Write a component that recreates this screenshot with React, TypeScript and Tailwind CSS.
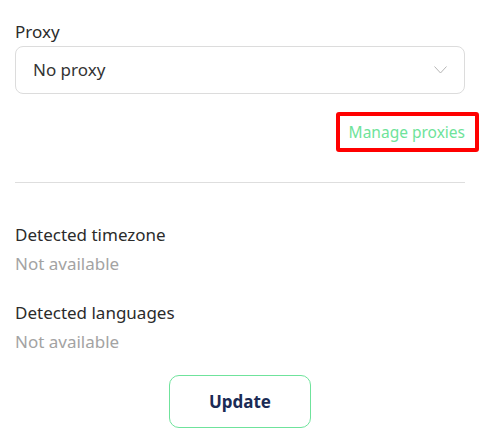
import React from "react";

export default function App() {
  const font = { fontFamily: '"Noto Sans", "Open Sans", sans-serif' };
  return (
    <div className="w-[485px] h-[442px] bg-white overflow-hidden" style={font}>
      <div className="ml-[15px] w-[450px] pt-[20px] flex flex-col">
        <label className="text-[17px] leading-6 text-[#2b2b2b] mb-[2px]">Proxy</label>
        <div className="h-[48px] rounded-[8px] border border-[#dcdcdc] flex items-center justify-between pl-[17px] pr-[17px]">
          <span className="text-[17px] text-[#333]">No proxy</span>
          <svg width="13" height="8" viewBox="0 0 13 8" fill="none">
            <path d="M0.5 0.5 L6.5 7 L12.5 0.5" stroke="#b5b5b5" strokeWidth="1" />
          </svg>
        </div>
        <div className="flex justify-end mt-[28px] h-[20px] items-center">
          <span className="relative text-[15.5px] leading-5 text-[#6ee39a]">
            Manage proxies
            <span className="absolute left-[-13px] right-[-14px] top-[-10px] bottom-[-10px] border-[4px] border-[#ff0000] rounded-[3px]" />
          </span>
        </div>
        <div className="mt-[40px] h-px bg-[#dedede]" />
        <div className="mt-[40px] text-[17px] leading-6 text-[#2b2b2b]">Detected timezone</div>
        <div className="mt-[5px] text-[17px] leading-6 text-[#a3a3a3]">Not available</div>
        <div className="mt-[25px] text-[17px] leading-6 text-[#2b2b2b]">Detected languages</div>
        <div className="mt-[5px] text-[17px] leading-6 text-[#a3a3a3]">Not available</div>
        <div className="flex justify-center mt-[21px]">
          <button className="w-[142px] h-[53px] rounded-[10px] border border-[#6fe39c] text-[17px] font-bold text-[#1b2b55] bg-white">
            Update
          </button>
        </div>
      </div>
    </div>
  );
}
